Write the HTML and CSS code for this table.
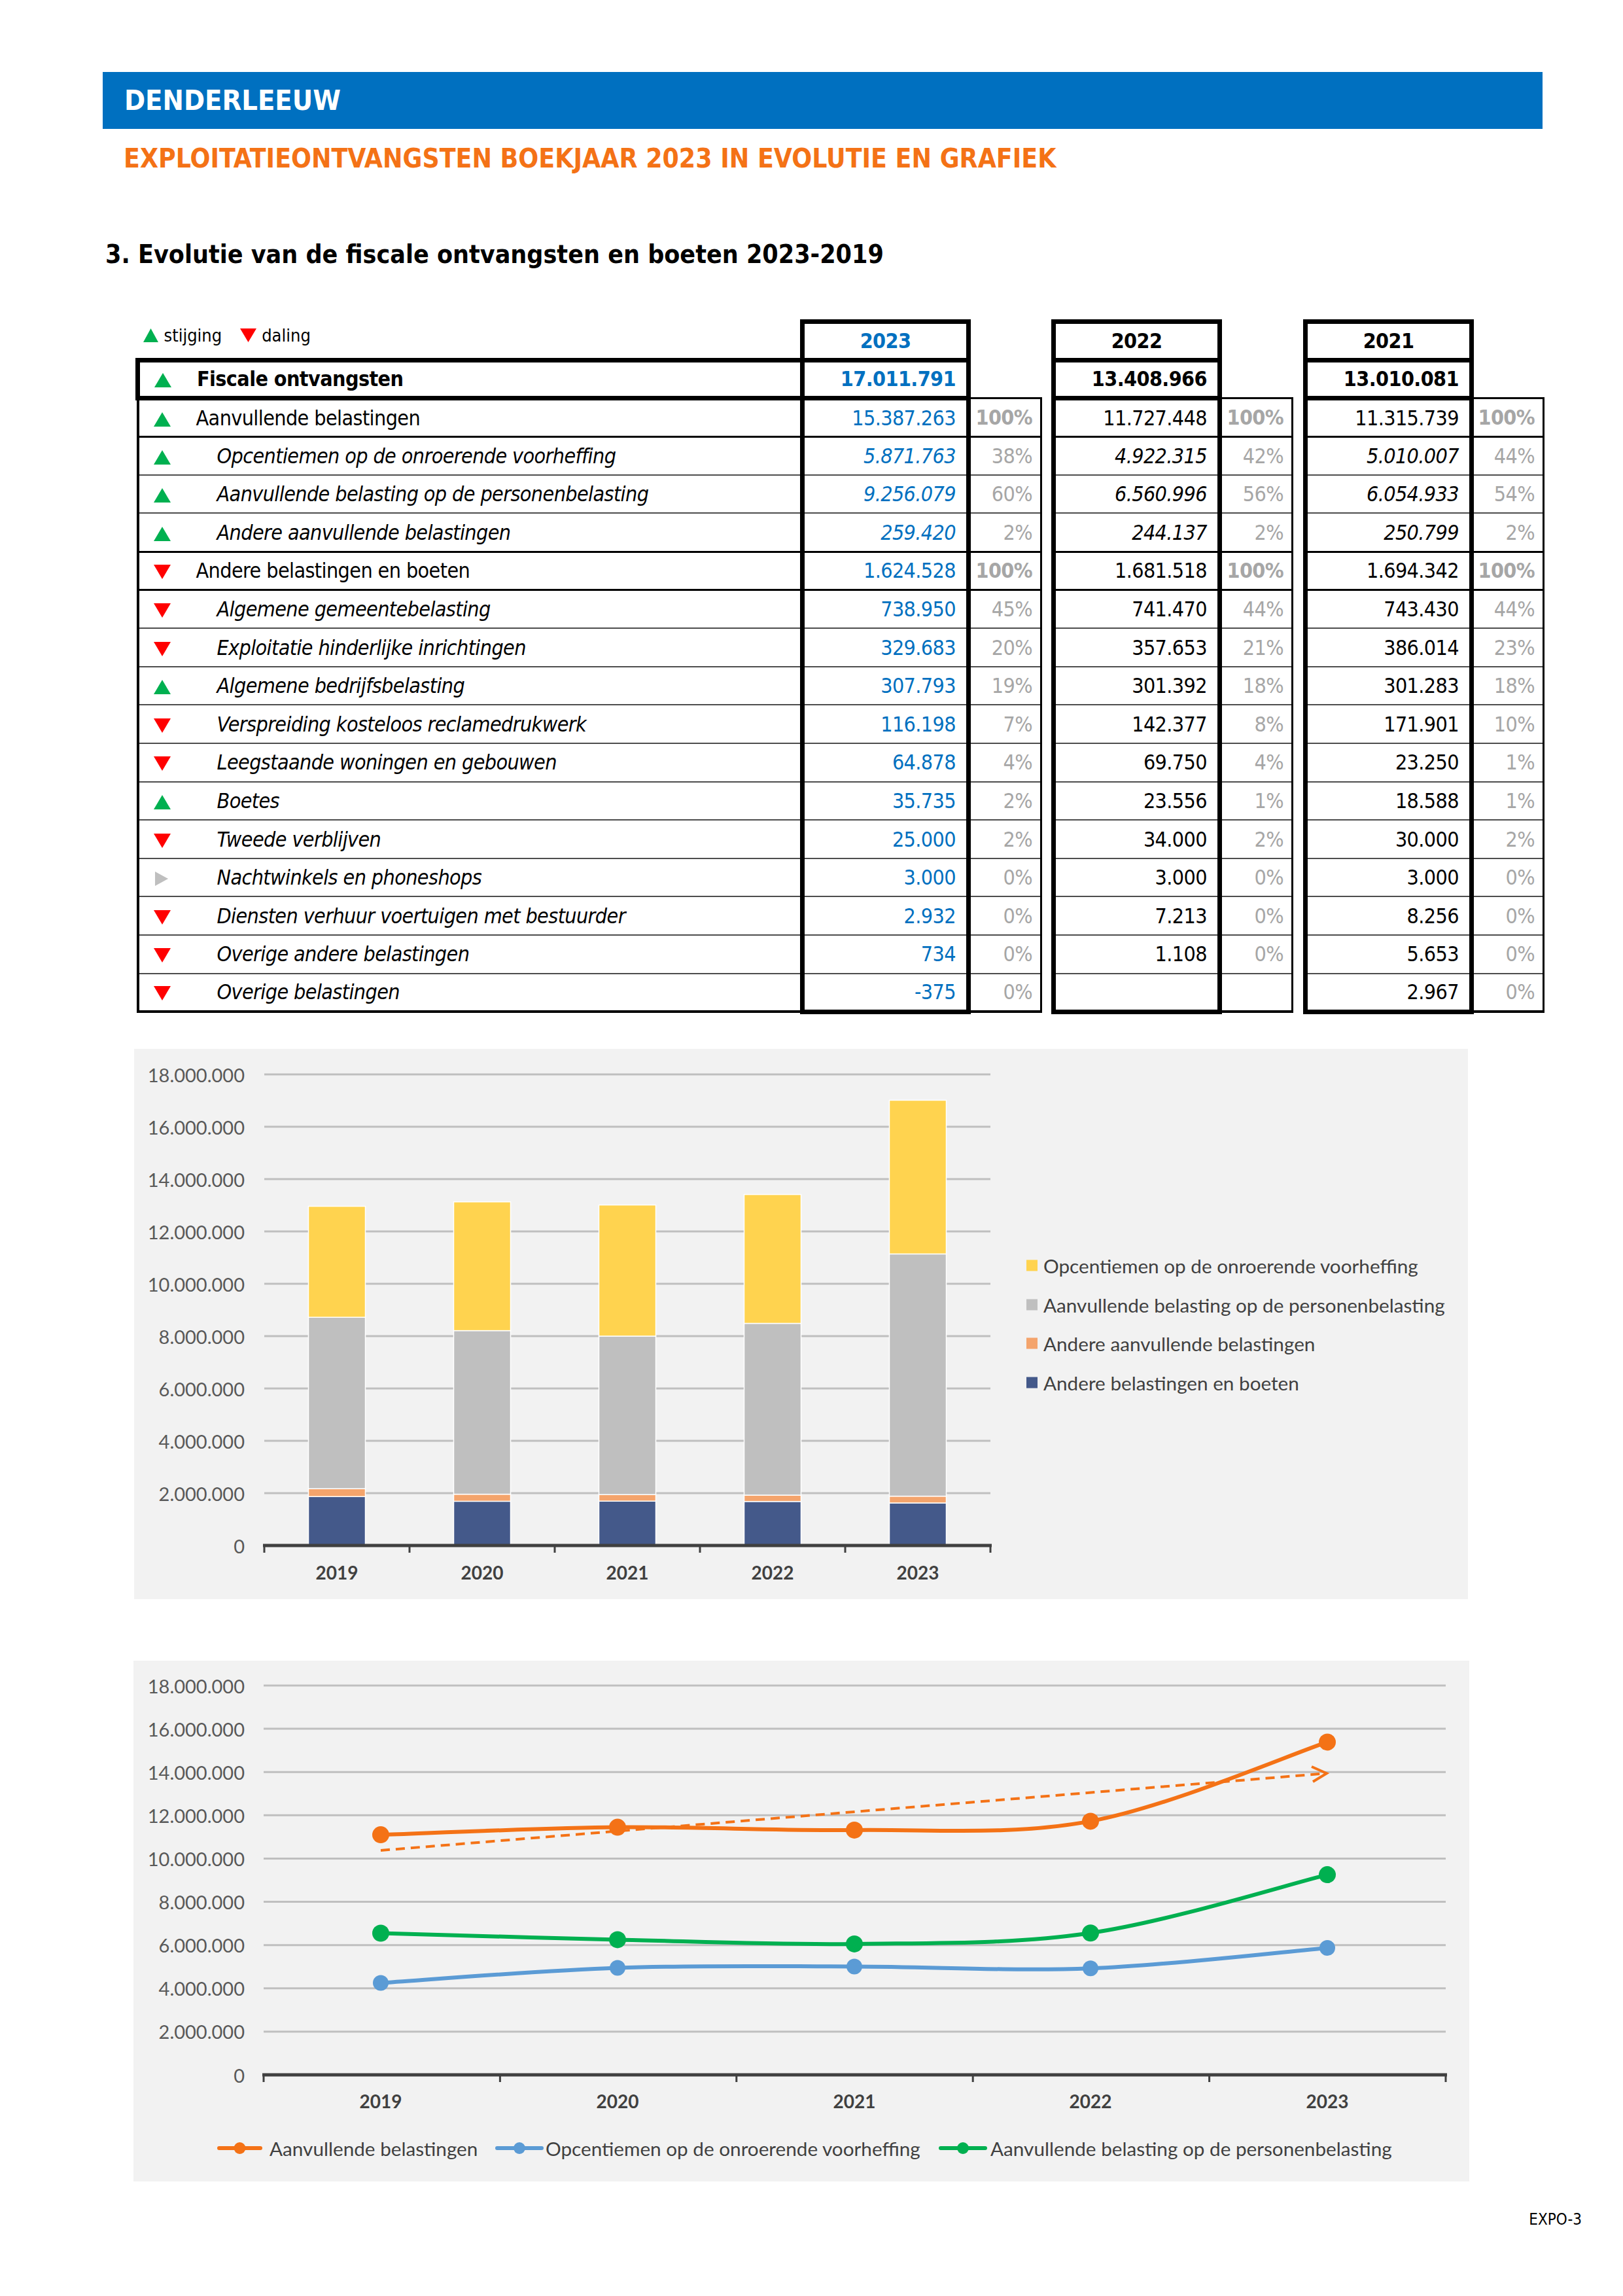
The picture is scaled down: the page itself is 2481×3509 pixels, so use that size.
FILE: index.html
```html
<!DOCTYPE html>
<html lang="nl">
<head>
<meta charset="utf-8">
<title>Denderleeuw – Exploitatieontvangsten</title>
<link rel="stylesheet" href="styles.css">
</head>
<body>
<div class="page">
  <div class="banner">DENDERLEEUW</div>
  <h1 class="subtitle">EXPLOITATIEONTVANGSTEN BOEKJAAR 2023 IN EVOLUTIE EN GRAFIEK</h1>
  <h2 class="section">3. Evolutie van de fiscale ontvangsten en boeten 2023-2019</h2>

  <table class="fin">
    <colgroup>
      <col class="c-lab"><col class="c-val"><col class="c-pct"><col class="c-sp">
      <col class="c-val"><col class="c-pct"><col class="c-sp2">
      <col class="c-val"><col class="c-pct3">
    </colgroup>
    <tr class="head">
      <td class="lab"><span class="legend"><svg class="ltri" width="23" height="21" viewBox="0 0 23 21"><polygon points="11.5,0 23,21 0,21" fill="#00b050"/></svg><span class="ltxt">stijging</span><svg class="ltri red" width="25" height="21" viewBox="0 0 25 21"><polygon points="0,0 25,0 12.5,21" fill="#ff0000"/></svg><span class="ltxt">daling</span></span></td>
      <td class="val y23">2023</td><td class="pct"></td><td class="sp"></td>
      <td class="val">2022</td><td class="pct"></td><td class="sp"></td>
      <td class="val">2021</td><td class="pct"></td>
    </tr>
    <tr class="total">
      <td class="lab"><span class="ico"><svg width="26" height="22" viewBox="0 0 26 22"><polygon points="13,0 26,22 0,22" fill="#00b050"/></svg></span>Fiscale ontvangsten</td>
      <td class="val y23">17.011.791</td><td class="pct"></td><td class="sp"></td>
      <td class="val">13.408.966</td><td class="pct"></td><td class="sp"></td>
      <td class="val">13.010.081</td><td class="pct"></td>
    </tr>
    <tr class="grp">
      <td class="lab"><span class="ico"><svg width="26" height="22" viewBox="0 0 26 22"><polygon points="13,0 26,22 0,22" fill="#00b050"/></svg></span>Aanvullende belastingen</td>
      <td class="val y23">15.387.263</td><td class="pct b">100%</td><td class="sp"></td>
      <td class="val">11.727.448</td><td class="pct b">100%</td><td class="sp"></td>
      <td class="val">11.315.739</td><td class="pct b">100%</td>
    </tr>
    <tr class="sub it">
      <td class="lab"><span class="ico"><svg width="26" height="22" viewBox="0 0 26 22"><polygon points="13,0 26,22 0,22" fill="#00b050"/></svg></span><span class="txt">Opcentiemen op de onroerende voorheffing</span></td>
      <td class="val y23">5.871.763</td><td class="pct">38%</td><td class="sp"></td>
      <td class="val">4.922.315</td><td class="pct">42%</td><td class="sp"></td>
      <td class="val">5.010.007</td><td class="pct">44%</td>
    </tr>
    <tr class="sub it">
      <td class="lab"><span class="ico"><svg width="26" height="22" viewBox="0 0 26 22"><polygon points="13,0 26,22 0,22" fill="#00b050"/></svg></span><span class="txt">Aanvullende belasting op de personenbelasting</span></td>
      <td class="val y23">9.256.079</td><td class="pct">60%</td><td class="sp"></td>
      <td class="val">6.560.996</td><td class="pct">56%</td><td class="sp"></td>
      <td class="val">6.054.933</td><td class="pct">54%</td>
    </tr>
    <tr class="sub it grpend">
      <td class="lab"><span class="ico"><svg width="26" height="22" viewBox="0 0 26 22"><polygon points="13,0 26,22 0,22" fill="#00b050"/></svg></span><span class="txt">Andere aanvullende belastingen</span></td>
      <td class="val y23">259.420</td><td class="pct">2%</td><td class="sp"></td>
      <td class="val">244.137</td><td class="pct">2%</td><td class="sp"></td>
      <td class="val">250.799</td><td class="pct">2%</td>
    </tr>
    <tr class="grp">
      <td class="lab"><span class="ico"><svg width="26" height="22" viewBox="0 0 26 22"><polygon points="0,0 26,0 13,22" fill="#ff0000"/></svg></span>Andere belastingen en boeten</td>
      <td class="val y23">1.624.528</td><td class="pct b">100%</td><td class="sp"></td>
      <td class="val">1.681.518</td><td class="pct b">100%</td><td class="sp"></td>
      <td class="val">1.694.342</td><td class="pct b">100%</td>
    </tr>
    <tr class="sub">
      <td class="lab"><span class="ico"><svg width="26" height="22" viewBox="0 0 26 22"><polygon points="0,0 26,0 13,22" fill="#ff0000"/></svg></span><span class="txt">Algemene gemeentebelasting</span></td>
      <td class="val y23">738.950</td><td class="pct">45%</td><td class="sp"></td>
      <td class="val">741.470</td><td class="pct">44%</td><td class="sp"></td>
      <td class="val">743.430</td><td class="pct">44%</td>
    </tr>
    <tr class="sub">
      <td class="lab"><span class="ico"><svg width="26" height="22" viewBox="0 0 26 22"><polygon points="0,0 26,0 13,22" fill="#ff0000"/></svg></span><span class="txt">Exploitatie hinderlijke inrichtingen</span></td>
      <td class="val y23">329.683</td><td class="pct">20%</td><td class="sp"></td>
      <td class="val">357.653</td><td class="pct">21%</td><td class="sp"></td>
      <td class="val">386.014</td><td class="pct">23%</td>
    </tr>
    <tr class="sub">
      <td class="lab"><span class="ico"><svg width="26" height="22" viewBox="0 0 26 22"><polygon points="13,0 26,22 0,22" fill="#00b050"/></svg></span><span class="txt">Algemene bedrijfsbelasting</span></td>
      <td class="val y23">307.793</td><td class="pct">19%</td><td class="sp"></td>
      <td class="val">301.392</td><td class="pct">18%</td><td class="sp"></td>
      <td class="val">301.283</td><td class="pct">18%</td>
    </tr>
    <tr class="sub">
      <td class="lab"><span class="ico"><svg width="26" height="22" viewBox="0 0 26 22"><polygon points="0,0 26,0 13,22" fill="#ff0000"/></svg></span><span class="txt">Verspreiding kosteloos reclamedrukwerk</span></td>
      <td class="val y23">116.198</td><td class="pct">7%</td><td class="sp"></td>
      <td class="val">142.377</td><td class="pct">8%</td><td class="sp"></td>
      <td class="val">171.901</td><td class="pct">10%</td>
    </tr>
    <tr class="sub">
      <td class="lab"><span class="ico"><svg width="26" height="22" viewBox="0 0 26 22"><polygon points="0,0 26,0 13,22" fill="#ff0000"/></svg></span><span class="txt">Leegstaande woningen en gebouwen</span></td>
      <td class="val y23">64.878</td><td class="pct">4%</td><td class="sp"></td>
      <td class="val">69.750</td><td class="pct">4%</td><td class="sp"></td>
      <td class="val">23.250</td><td class="pct">1%</td>
    </tr>
    <tr class="sub">
      <td class="lab"><span class="ico"><svg width="26" height="22" viewBox="0 0 26 22"><polygon points="13,0 26,22 0,22" fill="#00b050"/></svg></span><span class="txt">Boetes</span></td>
      <td class="val y23">35.735</td><td class="pct">2%</td><td class="sp"></td>
      <td class="val">23.556</td><td class="pct">1%</td><td class="sp"></td>
      <td class="val">18.588</td><td class="pct">1%</td>
    </tr>
    <tr class="sub">
      <td class="lab"><span class="ico"><svg width="26" height="22" viewBox="0 0 26 22"><polygon points="0,0 26,0 13,22" fill="#ff0000"/></svg></span><span class="txt">Tweede verblijven</span></td>
      <td class="val y23">25.000</td><td class="pct">2%</td><td class="sp"></td>
      <td class="val">34.000</td><td class="pct">2%</td><td class="sp"></td>
      <td class="val">30.000</td><td class="pct">2%</td>
    </tr>
    <tr class="sub">
      <td class="lab"><span class="ico"><svg width="26" height="22" viewBox="0 0 26 22"><polygon points="2,0 22,11 2,22" fill="#bfbfbf"/></svg></span><span class="txt">Nachtwinkels en phoneshops</span></td>
      <td class="val y23">3.000</td><td class="pct">0%</td><td class="sp"></td>
      <td class="val">3.000</td><td class="pct">0%</td><td class="sp"></td>
      <td class="val">3.000</td><td class="pct">0%</td>
    </tr>
    <tr class="sub">
      <td class="lab"><span class="ico"><svg width="26" height="22" viewBox="0 0 26 22"><polygon points="0,0 26,0 13,22" fill="#ff0000"/></svg></span><span class="txt">Diensten verhuur voertuigen met bestuurder</span></td>
      <td class="val y23">2.932</td><td class="pct">0%</td><td class="sp"></td>
      <td class="val">7.213</td><td class="pct">0%</td><td class="sp"></td>
      <td class="val">8.256</td><td class="pct">0%</td>
    </tr>
    <tr class="sub">
      <td class="lab"><span class="ico"><svg width="26" height="22" viewBox="0 0 26 22"><polygon points="0,0 26,0 13,22" fill="#ff0000"/></svg></span><span class="txt">Overige andere belastingen</span></td>
      <td class="val y23">734</td><td class="pct">0%</td><td class="sp"></td>
      <td class="val">1.108</td><td class="pct">0%</td><td class="sp"></td>
      <td class="val">5.653</td><td class="pct">0%</td>
    </tr>
    <tr class="sub last">
      <td class="lab"><span class="ico"><svg width="26" height="22" viewBox="0 0 26 22"><polygon points="0,0 26,0 13,22" fill="#ff0000"/></svg></span><span class="txt">Overige belastingen</span></td>
      <td class="val y23">-375</td><td class="pct">0%</td><td class="sp"></td>
      <td class="val"></td><td class="pct"></td><td class="sp"></td>
      <td class="val">2.967</td><td class="pct">0%</td>
    </tr>
  </table>

  <div class="chart bar-chart">
    <svg width="2039" height="841" viewBox="0 0 2039 841">
      <g class="grid">
        <line x1="199" y1="39" x2="1309" y2="39"/>
        <line x1="199" y1="119" x2="1309" y2="119"/>
        <line x1="199" y1="199" x2="1309" y2="199"/>
        <line x1="199" y1="279" x2="1309" y2="279"/>
        <line x1="199" y1="359" x2="1309" y2="359"/>
        <line x1="199" y1="439" x2="1309" y2="439"/>
        <line x1="199" y1="519" x2="1309" y2="519"/>
        <line x1="199" y1="599" x2="1309" y2="599"/>
        <line x1="199" y1="679" x2="1309" y2="679"/>
      </g>
      <g class="ylab">
        <text x="169" y="39">18.000.000</text>
        <text x="169" y="119">16.000.000</text>
        <text x="169" y="199">14.000.000</text>
        <text x="169" y="279">12.000.000</text>
        <text x="169" y="359">10.000.000</text>
        <text x="169" y="439">8.000.000</text>
        <text x="169" y="519">6.000.000</text>
        <text x="169" y="599">4.000.000</text>
        <text x="169" y="679">2.000.000</text>
        <text x="169" y="759">0</text>
      </g>
      <g class="bars">
        <rect class="s-bo" x="266.5" y="684.2" width="87" height="74.8"/>
        <rect class="s-an" x="266.5" y="672.2" width="87" height="12"/>
        <rect class="s-pb" x="266.5" y="410.2" width="87" height="262"/>
        <rect class="s-op" x="266.5" y="240.6" width="87" height="169.6"/>

        <rect class="s-bo" x="488.5" y="691.4" width="87" height="67.6"/>
        <rect class="s-an" x="488.5" y="680.6" width="87" height="10.8"/>
        <rect class="s-pb" x="488.5" y="430.6" width="87" height="250"/>
        <rect class="s-op" x="488.5" y="233.8" width="87" height="196.8"/>

        <rect class="s-bo" x="710.5" y="691.2" width="87" height="67.8"/>
        <rect class="s-an" x="710.5" y="681.2" width="87" height="10"/>
        <rect class="s-pb" x="710.5" y="439" width="87" height="242.2"/>
        <rect class="s-op" x="710.5" y="238.6" width="87" height="200.4"/>

        <rect class="s-bo" x="932.5" y="691.7" width="87" height="67.3"/>
        <rect class="s-an" x="932.5" y="682" width="87" height="9.7"/>
        <rect class="s-pb" x="932.5" y="419.5" width="87" height="262.5"/>
        <rect class="s-op" x="932.5" y="222.6" width="87" height="196.9"/>

        <rect class="s-bo" x="1154.5" y="694" width="87" height="65"/>
        <rect class="s-an" x="1154.5" y="683.6" width="87" height="10.4"/>
        <rect class="s-pb" x="1154.5" y="313.4" width="87" height="370.2"/>
        <rect class="s-op" x="1154.5" y="78.5" width="87" height="234.9"/>
      </g>
      <g class="axis">
        <line x1="197" y1="759" x2="1311" y2="759"/>
        <line class="tick" x1="199" y1="757" x2="199" y2="770"/>
        <line class="tick" x1="421" y1="757" x2="421" y2="770"/>
        <line class="tick" x1="643" y1="757" x2="643" y2="770"/>
        <line class="tick" x1="865" y1="757" x2="865" y2="770"/>
        <line class="tick" x1="1087" y1="757" x2="1087" y2="770"/>
        <line class="tick" x1="1309" y1="757" x2="1309" y2="770"/>
      </g>
      <g class="xlab">
        <text x="310" y="800">2019</text>
        <text x="532" y="800">2020</text>
        <text x="754" y="800">2021</text>
        <text x="976" y="800">2022</text>
        <text x="1198" y="800">2023</text>
      </g>
      <g class="legend-items">
        <rect class="s-op" x="1364" y="322.5" width="17" height="17"/>
        <text x="1390" y="331">Opcentiemen op de onroerende voorheffing</text>
        <rect class="s-pb" x="1364" y="382.5" width="17" height="17"/>
        <text x="1390" y="391">Aanvullende belasting op de personenbelasting</text>
        <rect class="s-an" x="1364" y="441.5" width="17" height="17"/>
        <text x="1390" y="450">Andere aanvullende belastingen</text>
        <rect class="s-bo" x="1364" y="501.5" width="17" height="17"/>
        <text x="1390" y="510">Andere belastingen en boeten</text>
      </g>
    </svg>
  </div>

  <div class="chart line-chart">
    <svg width="2042" height="796" viewBox="0 0 2042 796">
      <g class="grid">
        <line x1="199" y1="38" x2="2006" y2="38"/>
        <line x1="199" y1="104.1" x2="2006" y2="104.1"/>
        <line x1="199" y1="170.2" x2="2006" y2="170.2"/>
        <line x1="199" y1="236.3" x2="2006" y2="236.3"/>
        <line x1="199" y1="302.4" x2="2006" y2="302.4"/>
        <line x1="199" y1="368.6" x2="2006" y2="368.6"/>
        <line x1="199" y1="434.7" x2="2006" y2="434.7"/>
        <line x1="199" y1="500.8" x2="2006" y2="500.8"/>
        <line x1="199" y1="566.9" x2="2006" y2="566.9"/>
      </g>
      <g class="ylab">
        <text x="170" y="38">18.000.000</text>
        <text x="170" y="104.1">16.000.000</text>
        <text x="170" y="170.2">14.000.000</text>
        <text x="170" y="236.3">12.000.000</text>
        <text x="170" y="302.4">10.000.000</text>
        <text x="170" y="368.6">8.000.000</text>
        <text x="170" y="434.7">6.000.000</text>
        <text x="170" y="500.8">4.000.000</text>
        <text x="170" y="566.9">2.000.000</text>
        <text x="170" y="633">0</text>
      </g>
      <g class="axis">
        <line x1="197" y1="633" x2="2008" y2="633"/>
        <line class="tick" x1="199" y1="631" x2="199" y2="644"/>
        <line class="tick" x1="560.4" y1="631" x2="560.4" y2="644"/>
        <line class="tick" x1="921.8" y1="631" x2="921.8" y2="644"/>
        <line class="tick" x1="1283.2" y1="631" x2="1283.2" y2="644"/>
        <line class="tick" x1="1644.6" y1="631" x2="1644.6" y2="644"/>
        <line class="tick" x1="2006" y1="631" x2="2006" y2="644"/>
      </g>
      <g class="xlab">
        <text x="378" y="673">2019</text>
        <text x="740" y="673">2020</text>
        <text x="1102" y="673">2021</text>
        <text x="1463" y="673">2022</text>
        <text x="1825" y="673">2023</text>
      </g>
      <path class="ln ln-blue" d="M378,492.5 C438.3,488.6 619.3,473.6 740,469.4 C860.7,465.2 981.5,467.25 1102,467.4 C1222.5,467.55 1342.5,475.05 1463,470.3 C1583.5,465.55 1764.7,444.1 1825,438.9"/>
      <path class="ln ln-green" d="M378,416.5 C438.3,418.15 619.3,423.67 740,426.4 C860.7,429.13 981.5,434.6 1102,432.9 C1222.5,431.2 1342.5,433.83 1463,416.2 C1583.5,398.57 1764.7,341.95 1825,327.1"/>
      <path class="ln ln-orange" d="M378,266.1 C438.3,264.2 619.3,255.8 740,254.6 C860.7,253.4 981.5,260.4 1102,258.9 C1222.5,257.4 1342.5,267.8 1463,245.4 C1583.5,223 1764.7,144.6 1825,124.4"/>
      <line class="trend" x1="378" y1="290" x2="1820" y2="172.5"/>
      <polyline class="trend-head" points="1801,162 1824,172.2 1803,185"/>
      <g class="dots-blue">
        <circle cx="378" cy="492.5" r="12"/><circle cx="740" cy="469.4" r="12"/><circle cx="1102" cy="467.4" r="12"/><circle cx="1463" cy="470.3" r="12"/><circle cx="1825" cy="438.9" r="12"/>
      </g>
      <g class="dots-green">
        <circle cx="378" cy="416.5" r="13"/><circle cx="740" cy="426.4" r="13"/><circle cx="1102" cy="432.9" r="13"/><circle cx="1463" cy="416.2" r="13"/><circle cx="1825" cy="327.1" r="13"/>
      </g>
      <g class="dots-orange">
        <circle cx="378" cy="266.1" r="13"/><circle cx="740" cy="254.6" r="13"/><circle cx="1102" cy="258.9" r="13"/><circle cx="1463" cy="245.4" r="13"/><circle cx="1825" cy="124.4" r="13"/>
      </g>
      <g class="line-legend">
        <line class="ln ln-orange" x1="131" y1="745" x2="194" y2="745"/>
        <circle class="dot-o" cx="162.5" cy="745" r="9"/>
        <text x="208" y="745">Aanvullende belastingen</text>
        <line class="ln ln-blue" x1="556" y1="745" x2="624" y2="745"/>
        <circle class="dot-b" cx="590" cy="745" r="9"/>
        <text x="630" y="745">Opcentiemen op de onroerende voorheffing</text>
        <line class="ln ln-green" x1="1234" y1="745" x2="1302" y2="745"/>
        <circle class="dot-g" cx="1268" cy="745" r="9"/>
        <text x="1310" y="745">Aanvullende belasting op de personenbelasting</text>
      </g>
    </svg>
  </div>

  <div class="pageno">EXPO-3</div>
</div>
</body>
</html>
```

FILE: styles.css
```css
html, body {
  margin: 0;
  padding: 0;
  background: #ffffff;
}

.page {
  width: 2261px;
  padding: 110px 0 60px 157px;
  font-family: "DejaVu Sans Condensed", "DejaVu Sans", sans-serif;
  font-stretch: semi-condensed;
  color: #000;
}

.banner {
  width: 2201px;
  height: 87px;
  box-sizing: border-box;
  background: #0070c0;
  color: #ffffff;
  font-weight: bold;
  font-size: 43px;
  line-height: 87px;
  padding-left: 33px;
}

.subtitle {
  margin: 21px 0 0 32px;
  font-size: 40.5px;
  line-height: 48px;
  font-weight: bold;
  color: #f47216;
}

.section {
  margin: 101px 0 0 4px;
  font-size: 39px;
  line-height: 44px;
  font-weight: bold;
  color: #000;
}

/* ---------- table ---------- */
.fin {
  margin: 77px 0 0 50px;
  border-collapse: collapse;
  table-layout: fixed;
  width: 2150px;
  font-size: 32px;
  letter-spacing: -0.6px;
}

.c-lab { width: 1016px; }
.c-val { width: 254px; }
.c-pct { width: 111px; }
.c-sp { width: 19px; }
.c-sp2 { width: 20px; }
.c-pct3 { width: 110px; }

.fin tr { height: 58.6px; }

.fin td {
  padding: 0;
  vertical-align: middle;
  white-space: nowrap;
  overflow: hidden;
}

.fin td.lab {
  border-left: 4px solid #000;
  padding-left: 22px;
}

.fin td.val {
  border-left: 7px solid #000;
  border-right: 7px solid #000;
  text-align: right;
  padding-right: 16px;
}

.fin td.pct {
  border-right: 3px solid #000;
  text-align: right;
  padding-right: 12px;
  color: #a6a6a6;
}

.fin td.pct.b { font-weight: bold; }

.fin td.sp { border: none; }

.fin .y23 { color: #0070c0; }

.ico {
  display: inline-block;
  width: 65px;
  vertical-align: middle;
  line-height: 0;
}

.ico svg { display: block; }

.txt {
  padding-left: 32px;
  font-style: italic;
}

/* header row */
.fin tr.head td.lab {
  border: none;
  padding-left: 8px;
  padding-bottom: 14px;
}

.fin tr.head td.val {
  border-top: 7px solid #000;
  border-bottom: 7px solid #000;
  text-align: center;
  padding-right: 0;
  font-weight: bold;
}

.fin tr.head td.pct,
.fin tr.total td.pct {
  border: none;
}

.legend {
  display: inline-flex;
  align-items: center;
  font-size: 27px;
  letter-spacing: 0;
}

.ltri { display: block; margin-right: 9px; }
.ltri.red { margin-left: 28px; margin-right: 8px; }

/* total row */
.fin tr.total td { font-weight: bold; }

.fin tr.total td.lab,
.fin tr.total td.val {
  border-top: 7px solid #000;
  border-bottom: 7px solid #000;
}

.fin tr.total td.lab { border-left-width: 7px; }

/* group rows */
.fin tr.grp td.lab,
.fin tr.grp td.val,
.fin tr.grp td.pct {
  border-top: 3px solid #000;
  border-bottom: 3px solid #000;
}

/* sub rows */
.fin tr.sub td.lab,
.fin tr.sub td.val,
.fin tr.sub td.pct {
  border-bottom: 2px solid #4d4d4d;
}

.fin tr.it td.val { font-style: italic; }

.fin tr.grpend td.lab,
.fin tr.grpend td.val,
.fin tr.grpend td.pct {
  border-bottom: 3px solid #000;
}

.fin tr.last td.lab,
.fin tr.last td.pct {
  border-bottom: 4px solid #000;
}

.fin tr.last td.val {
  border-bottom: 7px solid #000;
}

/* ---------- charts ---------- */
.chart {
  background: #f2f2f2;
  line-height: 0;
}

.chart svg { display: block; }

.bar-chart {
  width: 2039px;
  margin: 53px 0 0 48px;
}

.line-chart {
  width: 2042px;
  margin: 94px 0 0 47px;
}

.grid line {
  stroke: #bfbfbf;
  stroke-width: 3;
}

.ylab text {
  font-family: Lato, "Open Sans", sans-serif;
  font-size: 29px;
  fill: #595959;
  text-anchor: end;
  dominant-baseline: central;
}

.xlab text {
  font-family: Lato, "Open Sans", sans-serif;
  font-size: 28px;
  font-weight: bold;
  fill: #404040;
  text-anchor: middle;
  dominant-baseline: central;
}

.axis line {
  stroke: #404040;
  stroke-width: 5;
}

.axis line.tick { stroke-width: 3; }

.bars rect { stroke: #ffffff; stroke-width: 1.5; }

.s-bo { fill: #44598a; }
.s-an { fill: #f4a46c; }
.s-pb { fill: #bfbfbf; }
.s-op { fill: #ffd34f; }

.legend-items text,
.line-legend text {
  font-family: Lato, "Open Sans", sans-serif;
  font-size: 29.7px;
  fill: #404040;
  dominant-baseline: central;
}

.ln {
  fill: none;
  stroke-width: 6;
  stroke-linecap: round;
}

.ln-orange { stroke: #f47216; }
.ln-blue { stroke: #5b9bd5; }
.ln-green { stroke: #00b050; }

.dots-orange circle, .dot-o { fill: #f47216; }
.dots-blue circle, .dot-b { fill: #5b9bd5; }
.dots-green circle, .dot-g { fill: #00b050; }

.trend {
  stroke: #f47216;
  stroke-width: 4;
  stroke-dasharray: 14 9;
}

.trend-head {
  fill: none;
  stroke: #f47216;
  stroke-width: 4;
  stroke-linejoin: miter;
}

.pageno {
  margin-top: 44px;
  width: 2261px;
  text-align: right;
  font-size: 24px;
  line-height: 28px;
}
```
